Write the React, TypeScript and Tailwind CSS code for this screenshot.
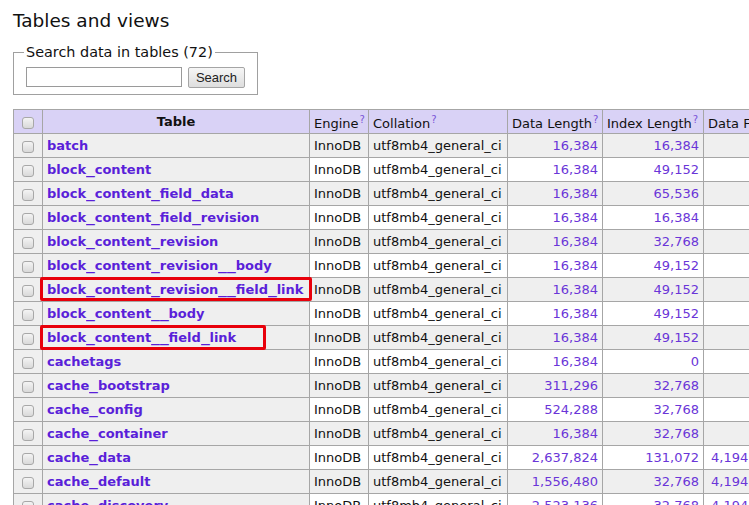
import React from "react";

type Row = { name: string; data: string; index: string; free?: string; box?: number };

const rows: Row[] = [
  { name: "batch", data: "16,384", index: "16,384" },
  { name: "block_content", data: "16,384", index: "49,152" },
  { name: "block_content_field_data", data: "16,384", index: "65,536" },
  { name: "block_content_field_revision", data: "16,384", index: "16,384" },
  { name: "block_content_revision", data: "16,384", index: "32,768" },
  { name: "block_content_revision__body", data: "16,384", index: "49,152" },
  { name: "block_content_revision__field_link", data: "16,384", index: "49,152", box: 1 },
  { name: "block_content__body", data: "16,384", index: "49,152" },
  { name: "block_content__field_link", data: "16,384", index: "49,152", box: 2 },
  { name: "cachetags", data: "16,384", index: "0" },
  { name: "cache_bootstrap", data: "311,296", index: "32,768" },
  { name: "cache_config", data: "524,288", index: "32,768" },
  { name: "cache_container", data: "16,384", index: "32,768" },
  { name: "cache_data", data: "2,637,824", index: "131,072", free: "4,194,304" },
  { name: "cache_default", data: "1,556,480", index: "32,768", free: "4,194,304" },
  { name: "cache_discovery", data: "2,523,136", index: "32,768", free: "4,194,304" },
];

function Check() {
  return (
    <span className="inline-block w-[12px] h-[12px] rounded-[3px] border border-[#a8a8a8] bg-gradient-to-b from-[#f4f4f4] to-[#d9d9d9] align-middle" />
  );
}

function Q() {
  return <sup className="text-[10px] text-[#7a52d8] ml-[1px]">?</sup>;
}

function Name({ text }: { text: string }) {
  const parts = text.split("_");
  return (
    <span className="font-bold text-[#5a1fd9]">
      {parts.map((p, i) => (
        <React.Fragment key={i}>
          {i > 0 && (
            <span className="inline-block w-[8.7px] overflow-visible">
              <span className="inline-block origin-left scale-x-[1.36]">_</span>
            </span>
          )}
          {p}
        </React.Fragment>
      ))}
    </span>
  );
}

export default function App() {
  return (
    <div
      className="w-[749px] h-[505px] overflow-hidden bg-white text-[#111] pl-[13px]"
      style={{ fontFamily: '"DejaVu Sans", Verdana, sans-serif' }}
    >
      <h1 className="text-[18.5px] leading-[22px] pt-[10px] font-normal">Tables and views</h1>
      <fieldset className="mt-[12px] w-[245px] h-[51px] border border-[#a0a0a0] px-[12px]">
        <legend className="text-[14.4px] leading-[16px] px-[2px] -ml-[2px]">Search data in tables (72)</legend>
        <div className="flex gap-[6px] mt-[7px]">
          <input className="w-[156px] h-[20px] border border-[#9a9a9a] bg-white" />
          <button
            className="h-[21px] w-[57px] border border-[#a5a5a5] rounded-[2px] bg-gradient-to-b from-[#f6f6f6] to-[#dedede] text-[13px] leading-[19px] text-[#222]"
            style={{ fontFamily: '"Liberation Sans", Arial, sans-serif' }}
          >
            Search
          </button>
        </div>
      </fieldset>
      <table className="mt-[14px] border-collapse table-fixed w-[790px] text-[13px] leading-[15px]">
        <colgroup>
          <col className="w-[29px]" />
          <col className="w-[267px]" />
          <col className="w-[59px]" />
          <col className="w-[139px]" />
          <col className="w-[95px]" />
          <col className="w-[101px]" />
          <col className="w-[100px]" />
        </colgroup>
        <thead>
          <tr className="bg-[#d9d2f6]">
            <th className="border border-[#a6a6a6] h-[24px] p-0 text-center">
              <Check />
            </th>
            <th className="border border-[#a6a6a6] h-[24px] p-0 text-center font-bold">Table</th>
            <th className="border border-[#a6a6a6] h-[24px] px-[4px] pt-[3px] pb-0 text-left font-normal whitespace-nowrap">
              Engine
              <Q />
            </th>
            <th className="border border-[#a6a6a6] h-[24px] px-[4px] pt-[3px] pb-0 text-left font-normal whitespace-nowrap">
              Collation
              <Q />
            </th>
            <th className="border border-[#a6a6a6] h-[24px] px-[4px] pt-[3px] pb-0 text-left font-normal whitespace-nowrap">
              Data Length
              <Q />
            </th>
            <th className="border border-[#a6a6a6] h-[24px] px-[4px] pt-[3px] pb-0 text-left font-normal whitespace-nowrap">
              Index Length
              <Q />
            </th>
            <th className="border border-[#a6a6a6] h-[24px] px-[4px] pt-[3px] pb-0 text-left font-normal whitespace-nowrap">
              Data Free
              <Q />
            </th>
          </tr>
        </thead>
        <tbody>
          {rows.map((r, i) => {
            const odd = i % 2 === 0;
            const bg = odd ? "bg-[#efefef]" : "bg-white";
            return (
              <tr key={r.name} className={bg}>
                <td className="border border-[#a6a6a6] h-[24px] p-0 text-center bg-[#efefef]">
                  <Check />
                </td>
                <td className="relative border border-[#a6a6a6] h-[24px] px-[4px] bg-[#efefef] whitespace-nowrap">
                  <Name text={r.name} />
                  {r.box === 1 && (
                    <span className="absolute left-[-3px] top-[-1px] w-[272px] h-[24px] border-[3px] border-[#e8000b] rounded-[2px]" />
                  )}
                  {r.box === 2 && (
                    <span className="absolute left-[-3px] top-[-1px] w-[226px] h-[25px] border-[3px] border-[#e8000b] rounded-[2px]" />
                  )}
                </td>
                <td className="border border-[#a6a6a6] h-[24px] px-[4px] whitespace-nowrap">InnoDB</td>
                <td className="border border-[#a6a6a6] h-[24px] px-[4px] whitespace-nowrap">utf8mb4_general_ci</td>
                <td className="border border-[#a6a6a6] h-[24px] px-[4px] text-right text-[#6a35d8] whitespace-nowrap">
                  {r.data}
                </td>
                <td className="border border-[#a6a6a6] h-[24px] px-[4px] text-right text-[#6a35d8] whitespace-nowrap">
                  {r.index}
                </td>
                <td className="border border-[#a6a6a6] h-[24px] px-[7px] text-left text-[#6a35d8] whitespace-nowrap">
                  {r.free ?? ""}
                </td>
              </tr>
            );
          })}
        </tbody>
      </table>
    </div>
  );
}
